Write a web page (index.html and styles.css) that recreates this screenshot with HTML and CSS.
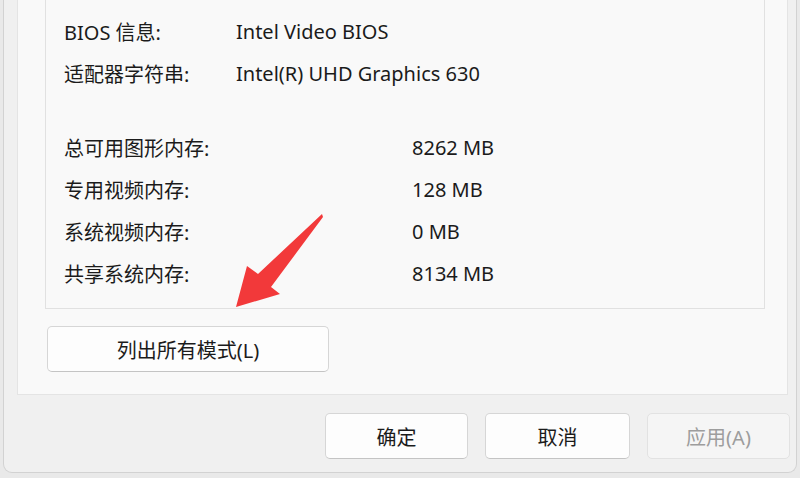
FILE: index.html
```html
<!DOCTYPE html>
<html lang="zh-CN">
<head>
    <meta charset="UTF-8">
    <title>适配器属性</title>
    <link rel="stylesheet" href="styles.css">
</head>
<body>
    <div class="window">
        <div class="tab-page">
            <div class="group">
                <div class="row"><span class="label">BIOS 信息:</span><span>Intel Video BIOS</span></div>
                <div class="row"><span class="label">适配器字符串:</span><span>Intel(R) UHD Graphics 630</span></div>
                <div class="row mem first"><span class="label">总可用图形内存:</span><span>8262 MB</span></div>
                <div class="row mem"><span class="label">专用视频内存:</span><span>128 MB</span></div>
                <div class="row mem"><span class="label">系统视频内存:</span><span>0 MB</span></div>
                <div class="row mem"><span class="label">共享系统内存:</span><span>8134 MB</span></div>
            </div>
            <button class="btn list-btn">列出所有模式(L)</button>
            <svg class="arrow" width="100" height="100" viewBox="0 0 100 100">
                <polygon points="90,4 91,7 39,77 48,84 4,97 15,56 26,64" fill="#f2393a"/>
            </svg>
        </div>
        <div class="footer">
            <button class="btn">确定</button>
            <button class="btn">取消</button>
            <button class="btn" disabled>应用(A)</button>
        </div>
    </div>
</body>
</html>
```

FILE: styles.css
```css
body{
    margin: 0;
    background: #e9e9e9;
    font-family: "Noto Sans", "Noto Sans CJK SC", sans-serif;
    font-size: 20px;
    color: #1b1b1b;
}
.window{
    margin: 0 3px;
    height: 473px;
    background: #f0f0f0;
    border: 1px solid #d2d2d2;
    border-top: none;
    border-radius: 0 0 9px 9px;
    box-sizing: border-box;
    padding-left: 13px;
    padding-right: 6px;
}
.tab-page{
    position: relative;
    height: 395px;
    box-sizing: border-box;
    margin-right: 2px;
    background: #f9f9f9;
    border: 1px solid #e4e4e4;
    border-top: none;
    padding-left: 27px;
    padding-right: 22px;
}
.group{
    border: 1px solid #e1e1e1;
    border-top: none;
    padding: 10px 0 14px 18px;
}
.row{
    display: flex;
    align-items: center;
    height: 42px;
}
.label{
    width: 172px;
}
.mem .label{
    width: 348px;
}
.row.first{
    margin-top: 32px;
}
.btn{
    font: inherit;
    color: #1b1b1b;
    background: #fdfdfd;
    border: 1px solid #d6d6d6;
    border-bottom-color: #c4c4c4;
    border-radius: 5px;
    height: 46px;
    width: 143px;
    padding: 0;
}
.btn:disabled{
    color: #9d9d9d;
    background: #f5f5f5;
    border-color: #e2e2e2;
}
.list-btn{
    width: 282px;
    margin: 17px 0 0 2px;
}
.arrow{
    position: absolute;
    left: 214px;
    top: 210px;
}
.footer{
    display: flex;
    justify-content: flex-end;
    gap: 17px;
    padding-top: 18px;
}
.footer .btn:nth-child(2){
    width: 145px;
}
```
